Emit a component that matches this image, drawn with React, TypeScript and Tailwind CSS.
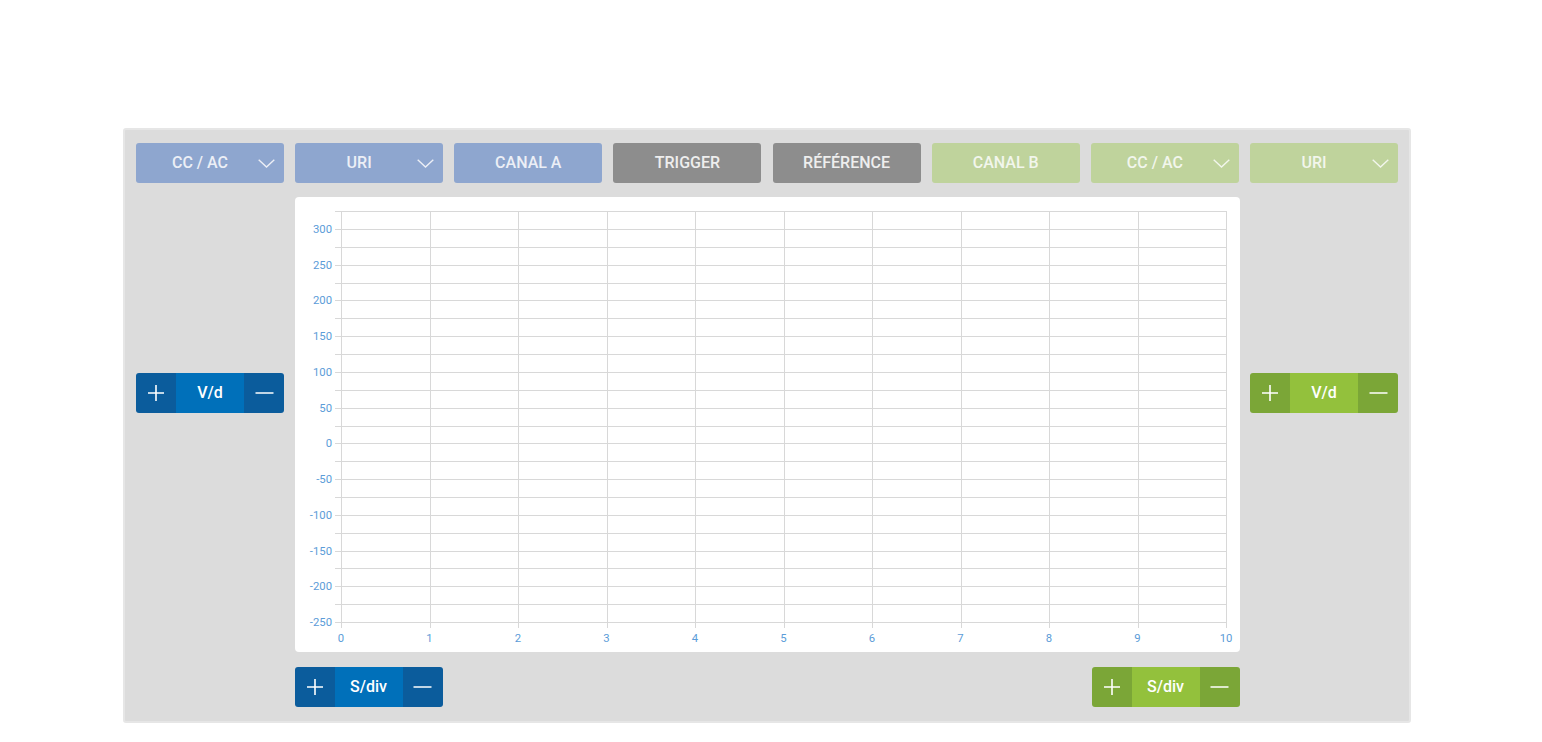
import React from "react";

const font = { fontFamily: "Roboto, 'Noto Sans', sans-serif" };

function Chevron({ color }: { color: string }) {
  return (
    <svg width="17" height="9" viewBox="0 0 17 9" className="shrink-0 mr-[9px]">
      <path d="M0.7 0.7 L8.5 8 L16.3 0.7" fill="none" stroke={color} strokeWidth="1.4" />
    </svg>
  );
}

function TopButton({
  label,
  bg,
  text,
  dropdown,
}: {
  label: string;
  bg: string;
  text: string;
  dropdown?: boolean;
}) {
  return (
    <div className={`w-[148px] h-[40px] rounded-[3px] flex items-center ${bg} ${text}`}>
      {dropdown ? (
        <>
          <span className="flex-1 text-center pl-[6px] text-[16px] font-medium">{label}</span>
          <Chevron color="currentColor" />
        </>
      ) : (
        <span className="flex-1 text-center text-[16px] font-medium">{label}</span>
      )}
    </div>
  );
}

function Plus() {
  return (
    <svg width="18" height="18" viewBox="0 0 18 18">
      <path d="M9 1 V17 M1 9 H17" stroke="white" strokeWidth="1.6" />
    </svg>
  );
}
function Minus() {
  return (
    <svg width="19" height="18" viewBox="0 0 19 18">
      <path d="M0.5 9 H18.5" stroke="white" strokeWidth="1.6" />
    </svg>
  );
}

function Control({ label, green }: { label: string; green?: boolean }) {
  const dark = green ? "bg-[#7ba637]" : "bg-[#0b5c9c]";
  const mid = green ? "bg-[#93c13c]" : "bg-[#0070ba]";
  return (
    <div className="w-[148px] h-[40px] rounded-[3px] overflow-hidden flex text-white">
      <div className={`w-[40px] flex items-center justify-center ${dark}`}>
        <Plus />
      </div>
      <div className={`flex-1 flex items-center justify-center text-[16px] font-medium ${mid}`}>{label}</div>
      <div className={`w-[40px] flex items-center justify-center ${dark}`}>
        <Minus />
      </div>
    </div>
  );
}

function Chart() {
  const x0 = 46;
  const dx = 88.5;
  const yOf = (v: number) => 32 + ((300 - v) / 25) * 17.864;
  const hs: number[] = [];
  for (let v = 325; v >= -250; v -= 25) hs.push(v);
  const labels: number[] = [];
  for (let v = 300; v >= -250; v -= 50) labels.push(v);
  const grid = "#d8d8d8";
  const lab = "#5b9cd8";
  return (
    <svg width="945" height="455" viewBox="0 0 945 455" className="block">
      {hs.map((v) => {
        const y = Math.round(yOf(v)) + 0.5;
        return <line key={"h" + v} x1={40} x2={931} y1={y} y2={y} stroke={grid} strokeWidth={1} />;
      })}
      {Array.from({ length: 11 }, (_, i) => {
        const x = Math.round(x0 + i * dx) + 0.5;
        return <line key={"v" + i} x1={x} x2={x} y1={14} y2={431} stroke={grid} strokeWidth={1} />;
      })}
      {labels.map((v) => (
        <text
          key={"l" + v}
          x={37}
          y={yOf(v) + 4}
          textAnchor="end"
          fontSize="11.3"
          fill={lab}
          fontFamily="Roboto, sans-serif"
        >
          {v}
        </text>
      ))}
      {Array.from({ length: 11 }, (_, i) => (
        <text
          key={"x" + i}
          x={x0 + i * dx}
          y={445}
          textAnchor="middle"
          fontSize="11.3"
          fill={lab}
          fontFamily="Roboto, sans-serif"
        >
          {i}
        </text>
      ))}
    </svg>
  );
}

export default function App() {
  const blue = "bg-[#8ea6cf]";
  const blueT = "text-[#eceff6]";
  const gray = "bg-[#8d8d8d]";
  const grayT = "text-[#eeeeee]";
  const green = "bg-[#bfd39c]";
  const greenT = "text-[#f2f6ec]";
  return (
    <div className="w-[1542px] h-[742px] bg-white pt-[128px] pl-[123px]" style={font}>
      <div className="w-[1288px] h-[595px] bg-[#dcdcdc] border-2 border-[#e6e6e6] rounded-[3px] px-[11px] pt-[13px] flex flex-col">
        <div className="flex justify-between">
          <TopButton label="CC / AC" bg={blue} text={blueT} dropdown />
          <TopButton label="URI" bg={blue} text={blueT} dropdown />
          <TopButton label="CANAL A" bg={blue} text={blueT} />
          <TopButton label="TRIGGER" bg={gray} text={grayT} />
          <TopButton label="RÉFÉRENCE" bg={gray} text={grayT} />
          <TopButton label="CANAL B" bg={green} text={greenT} />
          <TopButton label="CC / AC" bg={green} text={greenT} dropdown />
          <TopButton label="URI" bg={green} text={greenT} dropdown />
        </div>
        <div className="mt-[14px] grid grid-cols-[148px_945px_148px] justify-between">
          <div className="pt-[176px]">
            <Control label="V/d" />
          </div>
          <div className="h-[455px] bg-white rounded-[4px] overflow-hidden">
            <Chart />
          </div>
          <div className="pt-[176px]">
            <Control label="V/d" green />
          </div>
          <div />
          <div className="flex justify-between mt-[15px]">
            <Control label="S/div" />
            <Control label="S/div" green />
          </div>
          <div />
        </div>
      </div>
    </div>
  );
}
